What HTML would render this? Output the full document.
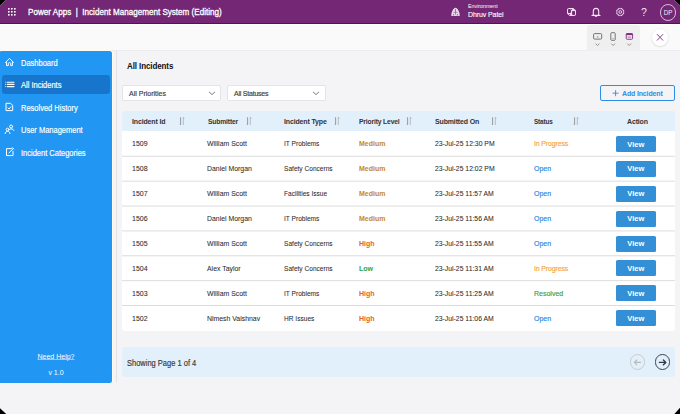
<!DOCTYPE html>
<html><head><meta charset="utf-8">
<style>
*{margin:0;padding:0;box-sizing:border-box}
html,body{width:680px;height:414px;overflow:hidden;background:#000}
body{font-family:"Liberation Sans",sans-serif;position:relative}
#app{position:absolute;left:0;top:0;width:680px;height:414px;background:#f4f4f6;overflow:hidden;
clip-path:polygon(5.7px 0,674px 0,680px 5.5px,680px 407.8px,674.4px 414px,6.2px 414px,0 408.2px,0 5.7px)}
.abs{position:absolute}
.t{position:absolute;white-space:nowrap;line-height:1}
.w{color:#fff}
.th{font-weight:bold;color:#333;letter-spacing:-0.3px}
.td{color:#2b2a29;-webkit-text-stroke-width:0.1px}
.med,.high,.low{-webkit-text-stroke-width:0}
.prog,.open,.res{-webkit-text-stroke-width:0.3px}
.btn{background:#3390d6;border-radius:1.5px}
.med{color:#c98a10;font-weight:bold}
.high{color:#e5622a;font-weight:bold}
.low{color:#2ea243;font-weight:bold}
.prog{color:#f5a540;letter-spacing:-0.3px}
.open{color:#2b87e3}
.res{color:#3aa04a}
</style></head><body>
<div id="app">
<div class="abs" style="left:0;top:0;width:680px;height:23px;background:#742774"></div>
<div class="abs" style="left:0;top:23px;width:680px;height:1px;background:#5e0b5e"></div>
<div class="abs" style="left:0;top:24px;width:680px;height:1px;background:#fff"></div>
<div class="abs" style="left:0;top:25px;width:680px;height:25px;background:#fafafa"></div>
<div class="abs" style="left:0;top:50px;width:680px;height:1px;background:#ececee"></div>
<svg class="abs" style="left:0;top:0" width="24" height="24" fill="#fff"><rect x="8" y="8" width="1.6" height="1.6"/><rect x="8" y="11" width="1.6" height="1.6"/><rect x="8" y="14" width="1.6" height="1.6"/><rect x="11" y="8" width="1.6" height="1.6"/><rect x="11" y="11" width="1.6" height="1.6"/><rect x="11" y="14" width="1.6" height="1.6"/><rect x="14" y="8" width="1.6" height="1.6"/><rect x="14" y="11" width="1.6" height="1.6"/><rect x="14" y="14" width="1.6" height="1.6"/></svg>
<div class="t w" style="left:27.5px;top:6.84px;font-size:16.20px;transform:scale(0.5000,0.6000);transform-origin:0 0;-webkit-text-stroke:0.55px #fff">Power Apps&nbsp;&nbsp;|&nbsp;&nbsp;Incident Management System (Editing)</div>
<div class="t w" style="left:468px;top:2.64px;font-size:10.60px;transform:scale(0.5000,0.5500);transform-origin:0 0;">Environment</div>
<div class="t w" style="left:468px;top:9.55px;font-size:14.00px;transform:scale(0.5000,0.5500);transform-origin:0 0;-webkit-text-stroke:0.2px #fff;letter-spacing:-0.2px">Dhruv Patel</div>
<svg class="abs" style="left:447px;top:4px" width="16" height="16">
<path d="M8.5 3.7 C6.6 3.7 4.3 7.6 4.3 11.9 H12.7 C12.7 7.6 10.4 3.7 8.5 3.7 Z" fill="#eadcea"/>
<path d="M8.2 5 H8.8 V10.4 H8.2 Z M5.7 11.2 L6.6 10 L7.5 11.2 Z M9.5 11.2 L10.4 10 L11.3 11.2 Z M6.3 8.4 L7.4 7.6 L7.4 9.1 Z M10.7 8.4 L9.6 7.6 L9.6 9.1 Z" fill="#742774"/></svg>
<svg class="abs" style="left:563px;top:4px" width="16" height="16">
<path d="M6.3 4 H10.3 L13 6.6 V10 C13 11.2 12.2 12 11 12 H6.7 L4 9.4 V6.1 C4 4.9 4.9 4 6.3 4 Z" fill="#efdfef"/>
<rect x="5" y="5.1" width="2.9" height="4" rx="0.8" fill="#742774"/><rect x="9.1" y="7" width="2.9" height="4" rx="0.8" fill="#742774"/>
<circle cx="8.6" cy="5.6" r="0.55" fill="#742774"/><circle cx="6.5" cy="10.5" r="0.55" fill="#742774"/></svg>
<svg class="abs" style="left:588px;top:4px" width="16" height="16" fill="none" stroke="#f4e8f4" stroke-width="1.1">
<path d="M5.3 10.6 V7.4 C5.3 5.6 6.5 4.4 8 4.4 C9.5 4.4 10.7 5.6 10.7 7.4 V10.6 L11.6 11.4 H4.4 Z"/><path d="M7 11.9 C7.2 12.5 8.8 12.5 9 11.9"/></svg>
<svg class="abs" style="left:612px;top:4px" width="16" height="16" fill="none" stroke="#efe0ef" stroke-width="0.9" stroke-linejoin="round">
<path d="M11.20 8.14 L11.93 8.71 L11.34 10.14 L10.42 10.02 L10.22 10.22 L10.34 11.14 L8.91 11.73 L8.34 11.00 L8.06 11.00 L7.49 11.73 L6.06 11.14 L6.18 10.22 L5.98 10.02 L5.06 10.14 L4.47 8.71 L5.20 8.14 L5.20 7.86 L4.47 7.29 L5.06 5.86 L5.98 5.98 L6.18 5.78 L6.06 4.86 L7.49 4.27 L8.06 5.00 L8.34 5.00 L8.91 4.27 L10.34 4.86 L10.22 5.78 L10.42 5.98 L11.34 5.86 L11.93 7.29 L11.20 7.86 Z"/><circle cx="8.2" cy="8" r="1.4"/></svg>
<div class="t w" style="left:640.5px;top:7.08px;font-size:21.00px;transform:scale(0.5000,0.5000);transform-origin:0 0;font-weight:normal;color:#f0e4f0">?</div>
<div class="abs" style="left:659.8px;top:4.1px;width:16.5px;height:16.5px;border:1px solid #d9bcd9;border-radius:50%"></div>
<div class="t w" style="left:658.1px;top:9.75px;font-size:12.60px;transform:scale(0.5000,0.5000);transform-origin:0 0;width:40.00px;text-align:center;color:#f4e8f4">DP</div>
<div class="abs" style="left:587px;top:25px;width:53px;height:25.5px;background:#efefef;border-radius:3px 3px 0 0"></div>
<svg class="abs" style="left:586px;top:24px" width="56" height="28" fill="none">
<rect x="7.6" y="9.6" width="8.1" height="5.5" rx="1.1" stroke="#6e6e6e" stroke-width="0.95"/><path d="M10.9 12.9 H12.5" stroke="#6e6e6e" stroke-width="0.8"/>
<rect x="24.8" y="8.7" width="4.4" height="7.6" rx="0.8" stroke="#6e6e6e" stroke-width="0.95"/><circle cx="27" cy="14.4" r="0.5" fill="#6e6e6e"/>
<rect x="40.2" y="9.7" width="6.4" height="5.6" rx="1" stroke="#8b3d8b" stroke-width="1"/><rect x="40.2" y="9.3" width="6.4" height="1.8" fill="#7a2a7a"/><rect x="41.5" y="12.3" width="3.8" height="1.8" fill="#c9a0c9"/>
<path d="M9.9 19.9 L11.5 21.5 L13.1 19.9 M25.6 19.9 L27.2 21.5 L28.8 19.9 M41.6 19.9 L43.2 21.5 L44.8 19.9" stroke="#7a7a7a" stroke-width="0.8" stroke-linecap="round" stroke-linejoin="round" fill="none"/>
</svg>
<div class="abs" style="left:651.5px;top:29.3px;width:16.4px;height:16.4px;background:#fff;border-radius:50%;box-shadow:0 0.5px 2px rgba(0,0,0,.18)"></div>
<svg class="abs" style="left:648px;top:26px" width="24" height="24"><path d="M9 8.2 L15.1 14.5 M15.1 8.2 L9 14.5" stroke="#8d3f8d" stroke-width="1"/></svg>
<div class="abs" style="left:0;top:51px;width:112px;height:332px;background:#2196f3;border-radius:1px 2.5px 2.5px 0;box-shadow:0 0 0.6px 1.1px #fffaf3"></div>
<div class="abs" style="left:2px;top:75px;width:108px;height:19px;background:#1776cb;border-radius:3px"></div>
<div class="t w" style="left:21px;top:58.97px;font-size:15.00px;transform:scale(0.5000,0.5750);transform-origin:0 0;-webkit-text-stroke:0.3px #fff">Dashboard</div>
<div class="t w" style="left:21px;top:81.47px;font-size:15.00px;transform:scale(0.5000,0.5750);transform-origin:0 0;-webkit-text-stroke:0.3px #fff">All Incidents</div>
<div class="t w" style="left:21px;top:103.87px;font-size:15.00px;transform:scale(0.5000,0.5750);transform-origin:0 0;-webkit-text-stroke:0.3px #fff">Resolved History</div>
<div class="t w" style="left:21px;top:126.37px;font-size:15.00px;transform:scale(0.5000,0.5750);transform-origin:0 0;-webkit-text-stroke:0.3px #fff">User Management</div>
<div class="t w" style="left:21px;top:148.67px;font-size:15.00px;transform:scale(0.5000,0.5750);transform-origin:0 0;-webkit-text-stroke:0.3px #fff">Incident Categories</div>
<svg class="abs" style="left:0;top:50px" width="20" height="120" stroke="#fff" stroke-width="1" fill="none" stroke-linecap="round" stroke-linejoin="round">
<path d="M5.6 12.4 L9.5 8.4 L13.4 12.4 M6.5 11.5 V15.6 H8.3 V13.3 C8.3 12.4 10.7 12.4 10.7 13.3 V15.6 H12.4 V11.5"/>
<path d="M7.2 32.2 H14 M7.2 34.4 H14 M7.2 36.6 H14" stroke-width="1.1"/><path d="M5.3 32.2 H5.6 M5.3 34.4 H5.6 M5.3 36.6 H5.6" stroke-width="1" opacity="0.7"/>
<path d="M6.4 53.3 H10.6 L12.7 55.4 V60.6 H6.4 Z"/><path d="M8 58 L9.1 59 L11 56.7"/>
<circle cx="7.6" cy="79.6" r="1.4"/><path d="M5.1 83.6 C5.3 82 6.3 81.4 7.6 81.4 C8.9 81.4 9.8 82 10 83.6"/><circle cx="11.1" cy="76.5" r="1.5"/><path d="M9.9 79.2 C11.3 78.4 13.2 78.8 13.8 80.4"/>
<path d="M11.5 98.6 H6.5 V105.6 H13 V101.2"/><path d="M9 103 L13.2 98.6 M12.4 97.6 L13.8 99"/>
</svg>
<div class="t w" style="left:0px;top:352.55px;font-size:14.00px;transform:scale(0.5000,0.5000);transform-origin:0 0;width:224.00px;text-align:center;text-decoration:underline;text-decoration-thickness:0.6px;text-underline-offset:1px">Need Help?</div>
<div class="t w" style="left:0px;top:368.65px;font-size:14.00px;transform:scale(0.5000,0.5000);transform-origin:0 0;width:224.00px;text-align:center;">v 1.0</div>
<div class="abs" style="left:116px;top:51px;width:1px;height:331px;background:#e4e4e6"></div>
<div class="t " style="left:127px;top:62.22px;font-size:16.00px;transform:scale(0.5000,0.5500);transform-origin:0 0;font-weight:bold;color:#111;letter-spacing:-0.2px">All Incidents</div>
<div class="abs" style="left:122px;top:85.4px;width:99px;height:15.4px;background:#fff;border:1px solid #e4e4e6;border-radius:2px"></div>
<div class="t " style="left:129px;top:89.26px;font-size:14.00px;transform:scale(0.5000,0.5750);transform-origin:0 0;color:#3b3a39;-webkit-text-stroke:0.3px #3b3a39;letter-spacing:0px">All Priorities</div>
<svg class="abs" style="left:207.5px;top:90px" width="8" height="6"><path d="M1 1.8 L4 4.6 L7 1.8" stroke="#555" stroke-width="0.8" fill="none"/></svg>
<div class="abs" style="left:227px;top:85.4px;width:99px;height:15.4px;background:#fff;border:1px solid #e4e4e6;border-radius:2px"></div>
<div class="t " style="left:234px;top:89.26px;font-size:14.00px;transform:scale(0.5000,0.5750);transform-origin:0 0;color:#3b3a39;-webkit-text-stroke:0.3px #3b3a39;letter-spacing:-0.45px">All Statuses</div>
<svg class="abs" style="left:312px;top:90px" width="8" height="6"><path d="M1 1.8 L4 4.6 L7 1.8" stroke="#555" stroke-width="0.8" fill="none"/></svg>
<div class="abs" style="left:600.3px;top:85.3px;width:74.4px;height:15.3px;border:1px solid #2e8de6;border-radius:2px"></div>
<svg class="abs" style="left:610px;top:88px" width="10" height="12"><path d="M5.6 2.2 V8.2 M2.6 5.2 H8.6" stroke="#2e8de6" stroke-width="0.9"/></svg>
<div class="t " style="left:622.4px;top:89.45px;font-size:14.00px;transform:scale(0.5000,0.5500);transform-origin:0 0;font-weight:bold;color:#2e8de6;letter-spacing:-0.3px">Add Incident</div>
<div class="abs" style="left:122px;top:111px;width:553px;height:20px;background:#e2f0fc;border-radius:2px 2px 0 0"></div>
<div class="t th" style="left:131.8px;top:116.56px;font-size:14.00px;transform:scale(0.5000,0.5750);transform-origin:0 0;">Incident Id</div>
<div class="t th" style="left:207.8px;top:116.56px;font-size:14.00px;transform:scale(0.4800,0.5750);transform-origin:0 0;">Submitter</div>
<div class="t th" style="left:283.6px;top:116.56px;font-size:14.00px;transform:scale(0.5000,0.5750);transform-origin:0 0;">Incident Type</div>
<div class="t th" style="left:359.4px;top:116.56px;font-size:14.00px;transform:scale(0.4800,0.5750);transform-origin:0 0;">Priority Level</div>
<div class="t th" style="left:434.9px;top:116.56px;font-size:14.00px;transform:scale(0.5000,0.5750);transform-origin:0 0;">Submitted On</div>
<div class="t th" style="left:533.5px;top:116.56px;font-size:14.00px;transform:scale(0.4550,0.5750);transform-origin:0 0;">Status</div>
<div class="t th" style="left:626.9px;top:116.56px;font-size:14.00px;transform:scale(0.5000,0.5750);transform-origin:0 0;">Action</div>
<svg class="abs" style="left:178.2px;top:115px" width="8" height="12" fill="none"><path d="M2.6 2.2 V10" stroke="#8e8e8e" stroke-width="0.9"/><path d="M1.4 8.8 L2.6 10" stroke="#a8a8a8" stroke-width="0.7"/><path d="M5.3 10 V2.2" stroke="#b4b4b4" stroke-width="0.9"/><path d="M5.3 2.2 L6.5 3.4" stroke="#a0a0a0" stroke-width="0.7"/></svg>
<svg class="abs" style="left:245.3px;top:115px" width="8" height="12" fill="none"><path d="M2.6 2.2 V10" stroke="#8e8e8e" stroke-width="0.9"/><path d="M1.4 8.8 L2.6 10" stroke="#a8a8a8" stroke-width="0.7"/><path d="M5.3 10 V2.2" stroke="#b4b4b4" stroke-width="0.9"/><path d="M5.3 2.2 L6.5 3.4" stroke="#a0a0a0" stroke-width="0.7"/></svg>
<svg class="abs" style="left:333.0px;top:115px" width="8" height="12" fill="none"><path d="M2.6 2.2 V10" stroke="#8e8e8e" stroke-width="0.9"/><path d="M1.4 8.8 L2.6 10" stroke="#a8a8a8" stroke-width="0.7"/><path d="M5.3 10 V2.2" stroke="#b4b4b4" stroke-width="0.9"/><path d="M5.3 2.2 L6.5 3.4" stroke="#a0a0a0" stroke-width="0.7"/></svg>
<svg class="abs" style="left:405.0px;top:115px" width="8" height="12" fill="none"><path d="M2.6 2.2 V10" stroke="#8e8e8e" stroke-width="0.9"/><path d="M1.4 8.8 L2.6 10" stroke="#a8a8a8" stroke-width="0.7"/><path d="M5.3 10 V2.2" stroke="#b4b4b4" stroke-width="0.9"/><path d="M5.3 2.2 L6.5 3.4" stroke="#a0a0a0" stroke-width="0.7"/></svg>
<svg class="abs" style="left:489.8px;top:115px" width="8" height="12" fill="none"><path d="M2.6 2.2 V10" stroke="#8e8e8e" stroke-width="0.9"/><path d="M1.4 8.8 L2.6 10" stroke="#a8a8a8" stroke-width="0.7"/><path d="M5.3 10 V2.2" stroke="#b4b4b4" stroke-width="0.9"/><path d="M5.3 2.2 L6.5 3.4" stroke="#a0a0a0" stroke-width="0.7"/></svg>
<svg class="abs" style="left:571.5px;top:115px" width="8" height="12" fill="none"><path d="M2.6 2.2 V10" stroke="#8e8e8e" stroke-width="0.9"/><path d="M1.4 8.8 L2.6 10" stroke="#a8a8a8" stroke-width="0.7"/><path d="M5.3 10 V2.2" stroke="#b4b4b4" stroke-width="0.9"/><path d="M5.3 2.2 L6.5 3.4" stroke="#a0a0a0" stroke-width="0.7"/></svg>
<div class="abs" style="left:122px;top:131px;width:553px;height:200px;background:#fff;border-radius:0 0 3px 3px"></div>
<div class="abs" style="left:122px;top:0;width:553px;height:1.3px;background:#dcdcde;transform:translateY(155.80px)"></div>
<div class="t td" style="left:131.8px;top:139.46px;font-size:14.00px;transform:scale(0.5000,0.5750);transform-origin:0 0;">1509</div>
<div class="t td" style="left:207.4px;top:139.46px;font-size:14.00px;transform:scale(0.4925,0.5750);transform-origin:0 0;">William Scott</div>
<div class="t td" style="left:283.70000000000005px;top:139.46px;font-size:14.00px;transform:scale(0.4700,0.5750);transform-origin:0 0;">IT Problems</div>
<div class="t td med" style="left:359.4px;top:139.16px;font-size:14.00px;transform:scale(0.5000,0.5750);transform-origin:0 0;">Medium</div>
<div class="t td" style="left:434.9px;top:139.46px;font-size:14.00px;transform:scale(0.4875,0.5750);transform-origin:0 0;">23-Jul-25 12:30 PM</div>
<div class="t td prog" style="left:533.5px;top:139.16px;font-size:14.00px;transform:scale(0.5000,0.5750);transform-origin:0 0;">In Progress</div>
<div class="abs btn" style="left:616px;top:136px;width:39.5px;height:16px"></div>
<div class="t w" style="left:616px;top:139.51px;font-size:15.00px;transform:scale(0.5000,0.5250);transform-origin:0 0;width:79.00px;text-align:center;font-weight:bold">View</div>
<div class="abs" style="left:122px;top:0;width:553px;height:1.3px;background:#dcdcde;transform:translateY(180.67px)"></div>
<div class="t td" style="left:131.8px;top:164.37px;font-size:14.00px;transform:scale(0.5000,0.5750);transform-origin:0 0;">1508</div>
<div class="t td" style="left:207.4px;top:164.37px;font-size:14.00px;transform:scale(0.4925,0.5750);transform-origin:0 0;">Daniel Morgan</div>
<div class="t td" style="left:283.70000000000005px;top:164.37px;font-size:14.00px;transform:scale(0.4700,0.5750);transform-origin:0 0;">Safety Concerns</div>
<div class="t td med" style="left:359.4px;top:164.07px;font-size:14.00px;transform:scale(0.5000,0.5750);transform-origin:0 0;">Medium</div>
<div class="t td" style="left:434.9px;top:164.37px;font-size:14.00px;transform:scale(0.4875,0.5750);transform-origin:0 0;">23-Jul-25 12:02 PM</div>
<div class="t td open" style="left:533.5px;top:164.07px;font-size:14.00px;transform:scale(0.5000,0.5750);transform-origin:0 0;">Open</div>
<div class="abs btn" style="left:616px;top:161px;width:39.5px;height:16px"></div>
<div class="t w" style="left:616px;top:164.42px;font-size:15.00px;transform:scale(0.5000,0.5250);transform-origin:0 0;width:79.00px;text-align:center;font-weight:bold">View</div>
<div class="abs" style="left:122px;top:0;width:553px;height:1.3px;background:#dcdcde;transform:translateY(205.54px)"></div>
<div class="t td" style="left:131.8px;top:189.28px;font-size:14.00px;transform:scale(0.5000,0.5750);transform-origin:0 0;">1507</div>
<div class="t td" style="left:207.4px;top:189.28px;font-size:14.00px;transform:scale(0.4925,0.5750);transform-origin:0 0;">William Scott</div>
<div class="t td" style="left:283.70000000000005px;top:189.28px;font-size:14.00px;transform:scale(0.4700,0.5750);transform-origin:0 0;">Facilities Issue</div>
<div class="t td med" style="left:359.4px;top:188.98px;font-size:14.00px;transform:scale(0.5000,0.5750);transform-origin:0 0;">Medium</div>
<div class="t td" style="left:434.9px;top:189.28px;font-size:14.00px;transform:scale(0.4875,0.5750);transform-origin:0 0;">23-Jul-25 11:57 AM</div>
<div class="t td open" style="left:533.5px;top:188.98px;font-size:14.00px;transform:scale(0.5000,0.5750);transform-origin:0 0;">Open</div>
<div class="abs btn" style="left:616px;top:186px;width:39.5px;height:16px"></div>
<div class="t w" style="left:616px;top:189.33px;font-size:15.00px;transform:scale(0.5000,0.5250);transform-origin:0 0;width:79.00px;text-align:center;font-weight:bold">View</div>
<div class="abs" style="left:122px;top:0;width:553px;height:1.3px;background:#dcdcde;transform:translateY(230.41px)"></div>
<div class="t td" style="left:131.8px;top:214.19px;font-size:14.00px;transform:scale(0.5000,0.5750);transform-origin:0 0;">1506</div>
<div class="t td" style="left:207.4px;top:214.19px;font-size:14.00px;transform:scale(0.4925,0.5750);transform-origin:0 0;">Daniel Morgan</div>
<div class="t td" style="left:283.70000000000005px;top:214.19px;font-size:14.00px;transform:scale(0.4700,0.5750);transform-origin:0 0;">IT Problems</div>
<div class="t td med" style="left:359.4px;top:213.89px;font-size:14.00px;transform:scale(0.5000,0.5750);transform-origin:0 0;">Medium</div>
<div class="t td" style="left:434.9px;top:214.19px;font-size:14.00px;transform:scale(0.4875,0.5750);transform-origin:0 0;">23-Jul-25 11:56 AM</div>
<div class="t td open" style="left:533.5px;top:213.89px;font-size:14.00px;transform:scale(0.5000,0.5750);transform-origin:0 0;">Open</div>
<div class="abs btn" style="left:616px;top:211px;width:39.5px;height:16px"></div>
<div class="t w" style="left:616px;top:214.24px;font-size:15.00px;transform:scale(0.5000,0.5250);transform-origin:0 0;width:79.00px;text-align:center;font-weight:bold">View</div>
<div class="abs" style="left:122px;top:0;width:553px;height:1.3px;background:#dcdcde;transform:translateY(255.28px)"></div>
<div class="t td" style="left:131.8px;top:239.10px;font-size:14.00px;transform:scale(0.5000,0.5750);transform-origin:0 0;">1505</div>
<div class="t td" style="left:207.4px;top:239.10px;font-size:14.00px;transform:scale(0.4925,0.5750);transform-origin:0 0;">William Scott</div>
<div class="t td" style="left:283.70000000000005px;top:239.10px;font-size:14.00px;transform:scale(0.4700,0.5750);transform-origin:0 0;">Safety Concerns</div>
<div class="t td high" style="left:359.4px;top:238.80px;font-size:14.00px;transform:scale(0.5000,0.5750);transform-origin:0 0;">High</div>
<div class="t td" style="left:434.9px;top:239.10px;font-size:14.00px;transform:scale(0.4875,0.5750);transform-origin:0 0;">23-Jul-25 11:55 AM</div>
<div class="t td open" style="left:533.5px;top:238.80px;font-size:14.00px;transform:scale(0.5000,0.5750);transform-origin:0 0;">Open</div>
<div class="abs btn" style="left:616px;top:236px;width:39.5px;height:16px"></div>
<div class="t w" style="left:616px;top:239.15px;font-size:15.00px;transform:scale(0.5000,0.5250);transform-origin:0 0;width:79.00px;text-align:center;font-weight:bold">View</div>
<div class="abs" style="left:122px;top:0;width:553px;height:1.3px;background:#dcdcde;transform:translateY(280.15px)"></div>
<div class="t td" style="left:131.8px;top:264.01px;font-size:14.00px;transform:scale(0.5000,0.5750);transform-origin:0 0;">1504</div>
<div class="t td" style="left:207.4px;top:264.01px;font-size:14.00px;transform:scale(0.4925,0.5750);transform-origin:0 0;">Alex Taylor</div>
<div class="t td" style="left:283.70000000000005px;top:264.01px;font-size:14.00px;transform:scale(0.4700,0.5750);transform-origin:0 0;">Safety Concerns</div>
<div class="t td low" style="left:359.4px;top:263.71px;font-size:14.00px;transform:scale(0.5000,0.5750);transform-origin:0 0;">Low</div>
<div class="t td" style="left:434.9px;top:264.01px;font-size:14.00px;transform:scale(0.4875,0.5750);transform-origin:0 0;">23-Jul-25 11:31 AM</div>
<div class="t td prog" style="left:533.5px;top:263.71px;font-size:14.00px;transform:scale(0.5000,0.5750);transform-origin:0 0;">In Progress</div>
<div class="abs btn" style="left:616px;top:260px;width:39.5px;height:16px"></div>
<div class="t w" style="left:616px;top:264.06px;font-size:15.00px;transform:scale(0.5000,0.5250);transform-origin:0 0;width:79.00px;text-align:center;font-weight:bold">View</div>
<div class="abs" style="left:122px;top:0;width:553px;height:1.3px;background:#dcdcde;transform:translateY(305.02px)"></div>
<div class="t td" style="left:131.8px;top:288.92px;font-size:14.00px;transform:scale(0.5000,0.5750);transform-origin:0 0;">1503</div>
<div class="t td" style="left:207.4px;top:288.92px;font-size:14.00px;transform:scale(0.4925,0.5750);transform-origin:0 0;">William Scott</div>
<div class="t td" style="left:283.70000000000005px;top:288.92px;font-size:14.00px;transform:scale(0.4700,0.5750);transform-origin:0 0;">IT Problems</div>
<div class="t td high" style="left:359.4px;top:288.62px;font-size:14.00px;transform:scale(0.5000,0.5750);transform-origin:0 0;">High</div>
<div class="t td" style="left:434.9px;top:288.92px;font-size:14.00px;transform:scale(0.4875,0.5750);transform-origin:0 0;">23-Jul-25 11:25 AM</div>
<div class="t td res" style="left:533.5px;top:288.62px;font-size:14.00px;transform:scale(0.5000,0.5750);transform-origin:0 0;">Resolved</div>
<div class="abs btn" style="left:616px;top:285px;width:39.5px;height:16px"></div>
<div class="t w" style="left:616px;top:288.97px;font-size:15.00px;transform:scale(0.5000,0.5250);transform-origin:0 0;width:79.00px;text-align:center;font-weight:bold">View</div>
<div class="t td" style="left:131.8px;top:313.83px;font-size:14.00px;transform:scale(0.5000,0.5750);transform-origin:0 0;">1502</div>
<div class="t td" style="left:207.4px;top:313.83px;font-size:14.00px;transform:scale(0.4925,0.5750);transform-origin:0 0;">Nimesh Vaishnav</div>
<div class="t td" style="left:283.70000000000005px;top:313.83px;font-size:14.00px;transform:scale(0.4700,0.5750);transform-origin:0 0;">HR Issues</div>
<div class="t td high" style="left:359.4px;top:313.53px;font-size:14.00px;transform:scale(0.5000,0.5750);transform-origin:0 0;">High</div>
<div class="t td" style="left:434.9px;top:313.83px;font-size:14.00px;transform:scale(0.4875,0.5750);transform-origin:0 0;">23-Jul-25 11:06 AM</div>
<div class="t td open" style="left:533.5px;top:313.53px;font-size:14.00px;transform:scale(0.5000,0.5750);transform-origin:0 0;">Open</div>
<div class="abs btn" style="left:616px;top:310px;width:39.5px;height:16px"></div>
<div class="t w" style="left:616px;top:313.88px;font-size:15.00px;transform:scale(0.5000,0.5250);transform-origin:0 0;width:79.00px;text-align:center;font-weight:bold">View</div>
<div class="abs" style="left:122px;top:347px;width:553px;height:30px;background:#e2f0fc;border-radius:3px"></div>
<div class="t " style="left:126.8px;top:358.77px;font-size:15.00px;transform:scale(0.5000,0.5750);transform-origin:0 0;color:#3b3a39;-webkit-text-stroke:0.3px #3b3a39">Showing Page 1 of 4</div>
<div class="abs" style="left:629.7px;top:354.3px;width:15.8px;height:15.8px;border:1px solid #cacaca;border-radius:50%"></div>
<div class="abs" style="left:654.6px;top:354.3px;width:15.8px;height:15.8px;border:1.2px solid #3c4450;border-radius:50%"></div>
<svg class="abs" style="left:626px;top:350px" width="48" height="24" fill="none" stroke-linecap="round" stroke-linejoin="round"><path d="M8.4 12.4 H14.6 M10.8 10 L8.4 12.4 L10.8 14.8" stroke="#b9b9b9" stroke-width="1.1"/><path d="M33.4 12.4 H39.8 M37.4 10 L39.8 12.4 L37.4 14.8" stroke="#353c47" stroke-width="1.4"/></svg>
</div>
</body></html>
